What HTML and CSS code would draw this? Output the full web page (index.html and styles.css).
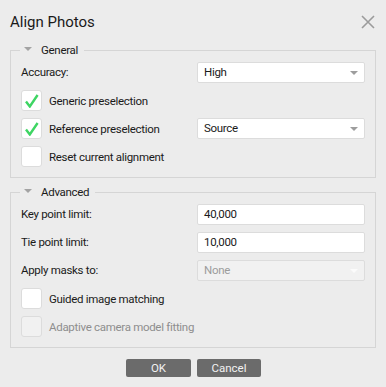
FILE: index.html
```html
<!DOCTYPE html>
<html lang="en">
<head>
    <meta charset="UTF-8">
    <title>Align Photos</title>
    <link rel="stylesheet" href="styles.css">
</head>
<body>
<div class="dialog">
    <div class="titlebar">
        <span class="title">Align Photos</span>
        <svg class="close" width="14" height="14" viewBox="0 0 14 14">
            <path d="M1 1 L13 13 M13 1 L1 13" stroke="#9b9b9b" stroke-width="1.6" fill="none"/>
        </svg>
    </div>

    <fieldset class="group">
        <legend><span class="caret"></span>General</legend>
        <div class="row">
            <span class="label">Accuracy:</span>
            <div class="combo">High<span class="arrow"></span></div>
        </div>
        <div class="row">
            <label class="check wide"><span class="box"><svg width="14" height="14" viewBox="0 0 14 14"><path d="M1 7.5 L4.8 12.5 L12.6 1" stroke="#3ed563" stroke-width="2.4" fill="none"/></svg></span>Generic preselection</label>
        </div>
        <div class="row">
            <label class="check"><span class="box"><svg width="14" height="14" viewBox="0 0 14 14"><path d="M1 7.5 L4.8 12.5 L12.6 1" stroke="#3ed563" stroke-width="2.4" fill="none"/></svg></span>Reference preselection</label>
            <div class="combo">Source<span class="arrow"></span></div>
        </div>
        <div class="row">
            <label class="check wide"><span class="box"></span>Reset current alignment</label>
        </div>
    </fieldset>

    <fieldset class="group advanced">
        <legend><span class="caret"></span>Advanced</legend>
        <div class="row">
            <span class="label">Key point limit:</span>
            <div class="field">40,000</div>
        </div>
        <div class="row">
            <span class="label">Tie point limit:</span>
            <div class="field">10,000</div>
        </div>
        <div class="row">
            <span class="label">Apply masks to:</span>
            <div class="combo disabled">None<span class="arrow"></span></div>
        </div>
        <div class="row">
            <label class="check wide"><span class="box"></span>Guided image matching</label>
        </div>
        <div class="row">
            <label class="check wide disabled"><span class="box"></span>Adaptive camera model fitting</label>
        </div>
    </fieldset>

    <div class="buttons">
        <button class="btn">OK</button>
        <button class="btn">Cancel</button>
    </div>
</div>
</body>
</html>
```

FILE: styles.css
```css
html, body {
    margin: 0;
    height: 100%;
}

body {
    background: #ececec;
    font-family: Roboto, "Liberation Sans", sans-serif;
    font-size: 11.5px;
    letter-spacing: -0.3px;
    color: #1a1a1a;
}

.dialog {
    width: 386px;
}

.titlebar {
    height: 42px;
    display: flex;
    align-items: flex-start;
    justify-content: space-between;
    padding: 0 11px 0 10px;
    box-sizing: border-box;
}

.title {
    font-size: 15px;
    line-height: 20px;
    letter-spacing: 0;
    margin-top: 12px;
    color: #1a1a1a;
}

.close {
    margin-top: 15px;
}

.group {
    margin: 0 10px;
    border: 1px solid #d5d5d5;
    padding: 4px 10px 10px;
    min-width: 0;
    display: flex;
    flex-direction: column;
    gap: 7px;
}

.advanced {
    margin-top: 6px;
}

legend {
    line-height: 16px;
    padding: 0 6px 0 4px;
    margin-left: -1px;
    display: flex;
    align-items: center;
    gap: 9px;
}

.caret {
    width: 0;
    height: 0;
    border-left: 4px solid transparent;
    border-right: 4px solid transparent;
    border-top: 4px solid #a3a3a3;
    margin-top: -3px;
}

.row {
    height: 21px;
    display: grid;
    grid-template-columns: 176px 168px;
    align-items: center;
}

.label {
    line-height: 21px;
}

.combo, .field {
    position: relative;
    height: 21px;
    box-sizing: border-box;
    background: #fff;
    border: 1px solid #dcdcdc;
    border-radius: 2px;
    padding-left: 6px;
    line-height: 19px;
    color: #1a1a1a;
}

.arrow {
    position: absolute;
    right: 6px;
    top: 8px;
    width: 0;
    height: 0;
    border-left: 4px solid transparent;
    border-right: 4px solid transparent;
    border-top: 4px solid #9d9d9d;
}

.combo.disabled {
    background: #f1f1f1;
    color: #9c9c9c;
}

.combo.disabled .arrow {
    border-top-color: #fbfbfb;
}

.check {
    display: flex;
    align-items: center;
    gap: 7px;
    white-space: nowrap;
}

.check.wide {
    grid-column: 1 / -1;
}

.box {
    flex-shrink: 0;
    width: 21px;
    height: 21px;
    box-sizing: border-box;
    background: #fff;
    border: 1px solid #dcdcdc;
    border-radius: 3px;
    display: flex;
    align-items: center;
    justify-content: center;
}

.check.disabled {
    color: #8e8e8e;
}

.check.disabled .box {
    background: #f1f1f1;
}

.buttons {
    display: flex;
    justify-content: center;
    gap: 6px;
    margin-top: 11px;
    padding-left: 1px;
}

.btn {
    height: 18px;
    border: none;
    border-radius: 2px;
    background: #6b6b6b;
    color: #f2f2f2;
    font-family: Roboto, "Liberation Sans", sans-serif;
    font-size: 11.5px;
    padding: 0;
}

.btn:first-child {
    width: 65px;
}

.btn:last-child {
    width: 64px;
}
```
